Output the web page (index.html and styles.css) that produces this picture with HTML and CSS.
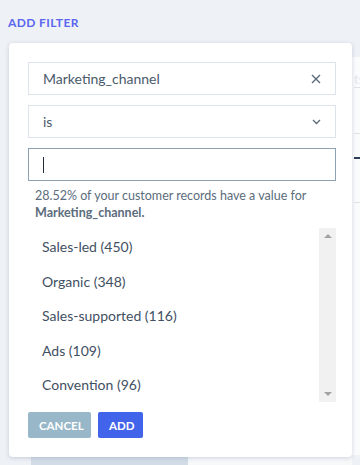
FILE: index.html
```html
<!DOCTYPE html>
<html lang="en">
<head>
  <meta charset="UTF-8">
  <meta name="viewport" content="width=device-width, initial-scale=1.0">
  <title>Add filter</title>
  <link rel="stylesheet" href="styles.css">
</head>
<body>
  <div class="page">
    <div class="addFilter">ADD FILTER</div>
    <div class="backdrop">
      <div class="chart">
        <div class="chartLabel">ts</div>
        <div class="dash"></div>
        <div class="dash"></div>
        <div class="bar"></div>
        <div class="dash"></div>
      </div>
      <div class="tabs">
        <div class="tabCur"></div>
        <div class="tabOther"></div>
      </div>
    </div>

    <div class="popover">
      <div class="field">
        <span>Marketing_channel</span>
        <svg class="ico" width="10" height="10" viewBox="0 0 10 10"><path d="M1 1L9 9M9 1L1 9" stroke="#5b6b7b" stroke-width="1.4" fill="none"/></svg>
      </div>
      <div class="field">
        <span>is</span>
        <svg class="ico" width="9" height="6" viewBox="0 0 9 6"><path d="M1 1L4.5 4.5L8 1" stroke="#5b6b7b" stroke-width="1.3" fill="none"/></svg>
      </div>
      <div class="field active"><i class="caret"></i></div>
      <p class="help">28.52% of your customer records have a value for <b>Marketing_channel.</b></p>
      <div class="list">
        <ul class="options">
          <li>Sales-led (450)</li>
          <li>Organic (348)</li>
          <li>Sales-supported (116)</li>
          <li>Ads (109)</li>
          <li>Convention (96)</li>
        </ul>
        <div class="scroll">
          <i class="up"></i>
          <i class="down"></i>
        </div>
      </div>
      <div class="actions">
        <button class="btn cancel">CANCEL</button>
        <button class="btn add">ADD</button>
      </div>
    </div>
  </div>
</body>
</html>
```
FILE: styles.css
```css
* {
  margin: 0;
  padding: 0;
  box-sizing: border-box;
}
body {
  background: #eef1f6;
  font-family: Lato, "Open Sans", sans-serif;
  color: #3f5062;
  width: 360px;
  height: 465px;
  overflow: hidden;
}
.page {
  position: relative;
  height: 465px;
  padding: 16px 8px 0;
}
.addFilter {
  font-size: 12px;
  font-weight: 700;
  letter-spacing: 0.4px;
  color: #5a67ee;
  line-height: 14px;
}

/* stuff behind the popover */
.backdrop {
  margin-top: 27px;
  margin-left: 12px;
}
.chart {
  height: 398px;
  margin-right: -8px;
  background: #fafbfc;
  padding: 14px 0 0 334px;
  overflow: hidden;
}
.chartLabel {
  color: #e3e6ec;
  font-size: 13px;
  line-height: 16px;
  white-space: nowrap;
}
.dash {
  border-top: 1px dashed #dfe3e8;
  margin-bottom: 45px;
}
.bar {
  height: 2px;
  background: #2e3e55;
  margin: -22px 0 43px;
}
.tabs {
  display: flex;
  height: 20px;
  margin-left: 11px;
}
.tabCur {
  width: 157px;
  background: #d2dce7;
}
.tabOther {
  width: 164px;
  background: #f6f8fa;
}

/* popover */
.popover {
  position: absolute;
  left: 9px;
  top: 43px;
  width: 343px;
  height: 414px;
  background: #fff;
  border-radius: 4px;
  box-shadow: 0 1px 4px rgba(80, 100, 130, 0.25);
  padding: 19px 16px 19px 19px;
  display: flex;
  flex-direction: column;
}
.popover > * {
  flex-shrink: 0;
}
.field {
  height: 33px;
  border: 1px solid #dde3ea;
  display: flex;
  align-items: center;
  justify-content: space-between;
  padding: 0 14px 0 14px;
  font-size: 14px;
  color: #4a5a6b;
  margin-bottom: 10px;
}
.field.active {
  border-color: #8ea2b2;
  margin-bottom: 6px;
}
.caret {
  width: 1px;
  height: 16px;
  background: #1f2d3d;
}
.ico {
  display: block;
}
.help {
  font-size: 12.5px;
  line-height: 17px;
  color: #5b6c7c;
  padding: 0 7px 0;
}
.help b {
  font-weight: 700;
}
.list {
  display: flex;
  height: 174px;
  margin-top: 7px;
}
.options {
  flex: 1;
  list-style: none;
  padding-top: 2px;
}
.options li {
  height: 34.5px;
  line-height: 34.5px;
  font-size: 14px;
  padding-left: 14px;
  color: #3f5062;
}
.scroll {
  width: 17px;
  background: #f1f1f1;
  display: flex;
  flex-direction: column;
  justify-content: space-between;
  align-items: center;
  padding: 6px 0 6px;
}
.up, .down {
  width: 0;
  height: 0;
  border-left: 4px solid transparent;
  border-right: 4px solid transparent;
}
.up {
  border-bottom: 4px solid #a3a3a3;
}
.down {
  border-top: 4px solid #a3a3a3;
}
.actions {
  display: flex;
  gap: 7px;
  margin-top: 10px;
}
.btn {
  height: 26px;
  border: none;
  border-radius: 2px;
  color: #fff;
  font-family: Lato, "Open Sans", sans-serif;
  font-size: 11.5px;
  font-weight: 700;
  padding: 0 11px;
}
.cancel {
  background: #98b7c8;
  width: 63px;
}
.add {
  background: #4264eb;
  width: 45px;
}
```
